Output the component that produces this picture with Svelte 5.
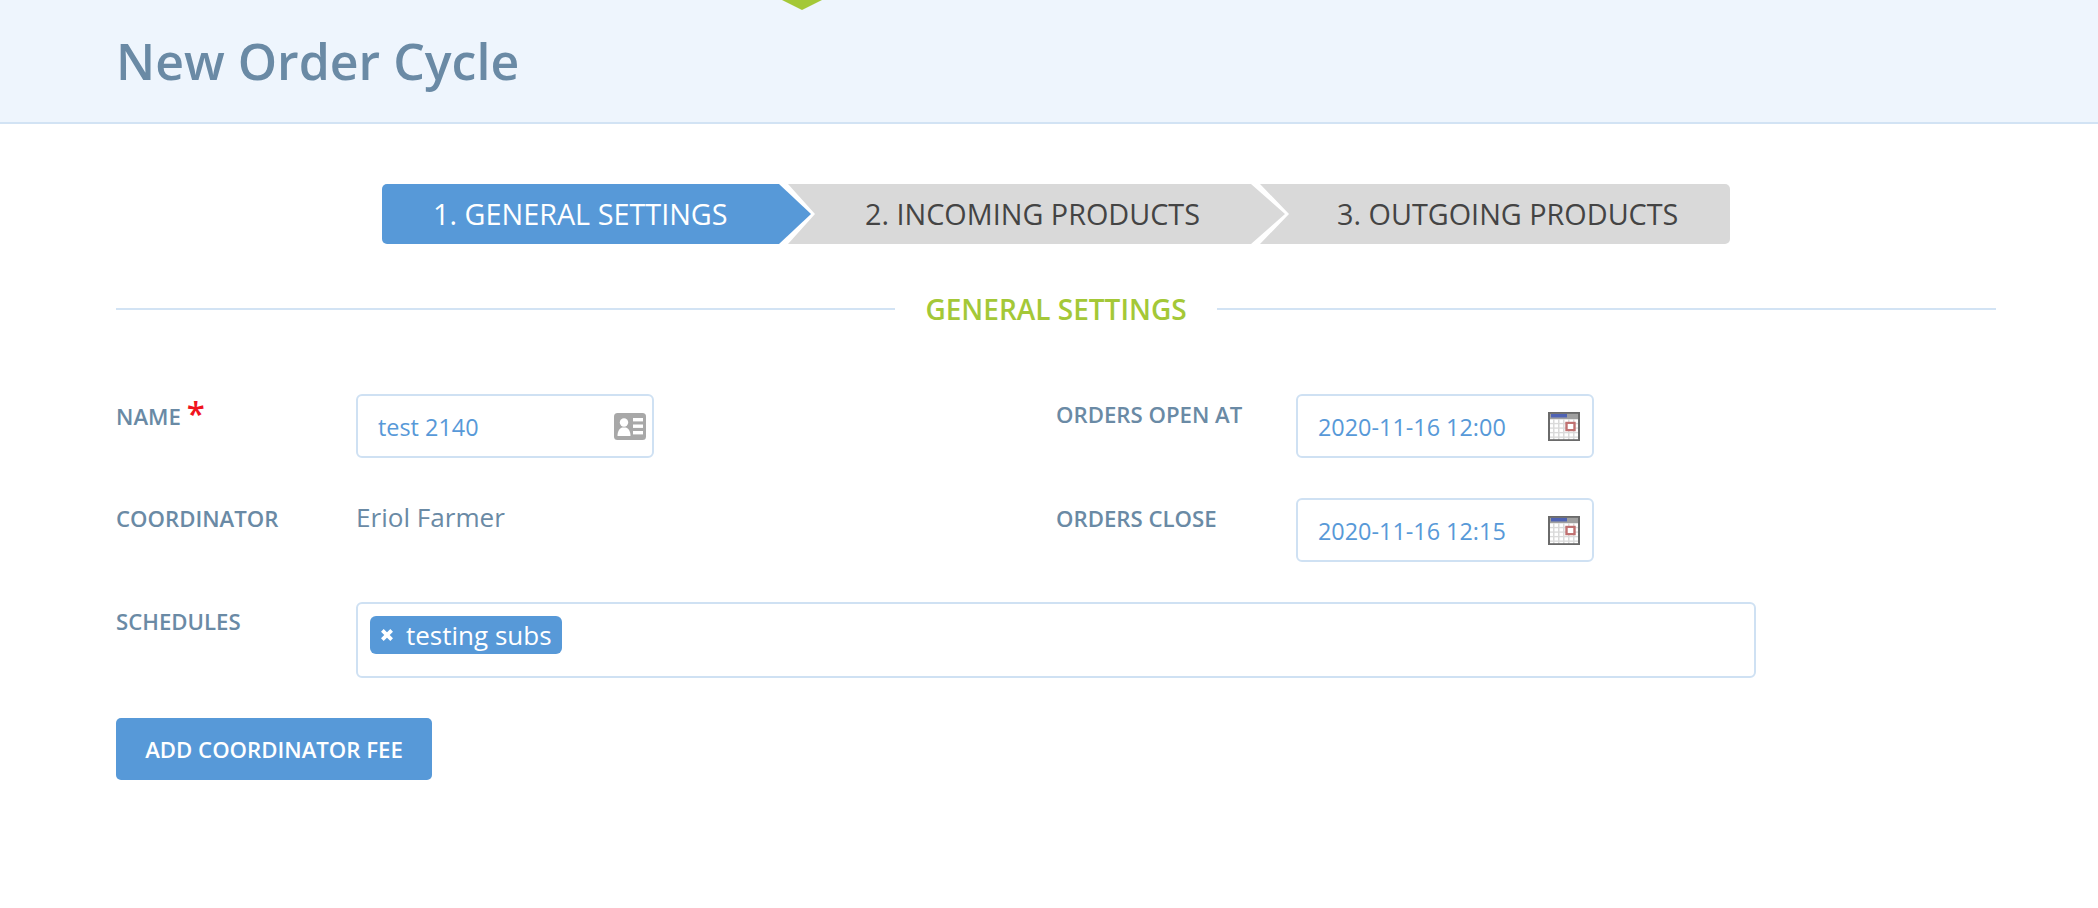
<script>
  const calendarCols = [5, 10, 15, 20, 25];
  const calendarRows = [12, 17, 22, 27];
</script>

{#snippet calendar()}
  <svg class="cal" viewBox="0 0 32 32" preserveAspectRatio="none" aria-hidden="true">
    <rect x="0" y="0" width="32" height="32" fill="#fff" />
    <rect x="0" y="0" width="32" height="8" fill="#a0a0a0" />
    <rect x="3" y="2" width="16" height="4" fill="#4f63b4" />
    {#each calendarCols as x}<rect {x} y="8" width="1.5" height="24" fill="#dadada" />{/each}
    {#each calendarRows as y}<rect x="0" {y} width="32" height="1.5" fill="#dadada" />{/each}
    <rect x="18.5" y="12" width="8" height="8" fill="#fff" stroke="#c07070" stroke-width="2.4" />
    <rect x="1" y="1" width="30" height="30" fill="none" stroke="#6a6a6a" stroke-width="2" />
  </svg>
{/snippet}

<div class="page">
  <header class="banner">
    <span class="notch"></span>
    <h1>New Order Cycle</h1>
  </header>

  <main class="content">
    <nav class="steps">
      <div class="step first active">1. GENERAL SETTINGS</div>
      <div class="step second">2. INCOMING PRODUCTS</div>
      <div class="step third">3. OUTGOING PRODUCTS</div>
    </nav>

    <div class="divider"><span>GENERAL SETTINGS</span></div>

    <form class="form">
      <div class="row">
        <div class="col">
          <label class="lbl name">NAME <em>*</em></label>
          <div class="field">
            <span class="val">test 2140</span>
            <svg class="card" viewBox="0 0 32 27" aria-hidden="true">
              <rect width="32" height="27" rx="3.5" fill="#a8a8a8" />
              <circle cx="10" cy="9.5" r="4.2" fill="#fff" />
              <path d="M3.5 23c0-5 2-7.5 4.5-8.5h4c2.5 1 4.5 3.5 4.5 8.5z" fill="#fff" />
              <rect x="19" y="5" width="10" height="3.4" fill="#fff" />
              <rect x="19" y="11.5" width="10" height="3.4" fill="#fff" />
              <rect x="19" y="18" width="10" height="3.4" fill="#fff" />
            </svg>
          </div>
        </div>
        <div class="col right">
          <label class="lbl">ORDERS OPEN AT</label>
          <div class="field"><span class="val">2020-11-16 12:00</span>{@render calendar()}</div>
        </div>
      </div>

      <div class="row">
        <div class="col">
          <label class="lbl coord">COORDINATOR</label>
          <span class="plain">Eriol Farmer</span>
        </div>
        <div class="col right">
          <label class="lbl">ORDERS CLOSE</label>
          <div class="field"><span class="val">2020-11-16 12:15</span>{@render calendar()}</div>
        </div>
      </div>

      <div class="row">
        <div class="col wide">
          <label class="lbl sched">SCHEDULES</label>
          <div class="multi">
            <span class="tag">
              <svg class="x" viewBox="0 0 12 12" aria-hidden="true"><path d="M2 2l8 8M10 2l-8 8" stroke="#fff" stroke-width="3.2" /></svg>
              testing subs
            </span>
          </div>
        </div>
      </div>

      <button type="button" class="fee">ADD COORDINATOR FEE</button>
    </form>
  </main>
</div>

<style>
  :global(body) {
    margin: 0;
    background: #fff;
  }
  .page {
    font-family: "Open Sans", sans-serif;
    width: 2098px;
    height: 908px;
    overflow: hidden;
  }
  .banner {
    position: relative;
    height: 122px;
    background: #eef5fd;
    border-bottom: 2px solid #d2e3f4;
    padding-left: 116px;
    box-sizing: content-box;
  }
  .notch {
    position: absolute;
    left: 782px;
    top: 0;
    width: 40px;
    height: 10px;
    background: #a4c837;
    clip-path: polygon(0 0, 100% 0, 50% 100%);
  }
  h1 {
    margin: 0;
    padding-top: 29px;
    font-size: 50px;
    line-height: 64px;
    font-weight: 600;
    color: #6a8aa5;
  }
  .content {
    padding: 60px 102px 0 116px;
  }
  .steps {
    display: flex;
    height: 60px;
    margin-left: 266px;
  }
  .step {
    height: 60px;
    line-height: 60px;
    box-sizing: border-box;
    font-size: 28.8px;
    background: #d9d9d9;
    color: #444;
    white-space: nowrap;
  }
  .step.active {
    background: #5799d8;
    color: #fff;
  }
  .first {
    width: 429px;
    padding-left: 51px;
    border-radius: 5px 0 0 5px;
    clip-path: polygon(0 0, 397px 0, 100% 50%, 397px 100%, 0 100%);
  }
  .second {
    width: 497px;
    margin-left: -23px;
    padding-left: 77px;
    clip-path: polygon(0 0, 463px 0, 100% 50%, 463px 100%, 0 100%, 27px 50%);
  }
  .third {
    width: 470px;
    margin-left: -25px;
    padding-left: 77px;
    border-radius: 0 5px 5px 0;
    clip-path: polygon(0 0, 100% 0, 100% 100%, 0 100%, 29px 50%);
  }
  .divider {
    display: flex;
    align-items: center;
    gap: 30px;
    margin-top: 45px;
    height: 40px;
    font-size: 28px;
    font-weight: 600;
    color: #a4c837;
    white-space: nowrap;
  }
  .divider::before,
  .divider::after {
    content: "";
    flex: 1;
    height: 2px;
    background: #d2e3f4;
  }
  .form {
    padding-top: 65px;
  }
  .row {
    display: flex;
    height: 64px;
    margin-bottom: 40px;
  }
  .row:nth-child(3) {
    height: 76px;
    margin-bottom: 40px;
  }
  .col {
    display: flex;
    width: 940px;
  }
  .col.right {
    width: auto;
  }
  .col.wide {
    width: 100%;
  }
  .lbl {
    width: 240px;
    padding-top: 5px;
    font-size: 22.2px;
    line-height: 32px;
    font-weight: 600;
    color: #6a8aa5;
    white-space: nowrap;
  }
  .lbl.name {
    padding-top: 7px;
  }
  .lbl.sched {
    padding-top: 4px;
  }
  .lbl em {
    font-style: normal;
    color: #f0141e;
    font-size: 33px;
    line-height: 20px;
    font-weight: 600;
    vertical-align: -1px;
  }
  .lbl.coord {
    padding-top: 5px;
  }
  .field {
    display: flex;
    align-items: center;
    justify-content: space-between;
    width: 298px;
    height: 64px;
    box-sizing: border-box;
    border: 2px solid #cfe1f3;
    border-radius: 6px;
    padding: 0 6px 0 20px;
    background: #fff;
  }
  .val {
    font-size: 23.4px;
    color: #5799d8;
    white-space: nowrap;
    position: relative;
    top: 1px;
  }
  .card {
    width: 32px;
    height: 27px;
    flex: none;
  }
  .cal {
    width: 32px;
    height: 29px;
    flex: none;
    margin-right: 6px;
  }
  .plain {
    font-size: 26.1px;
    line-height: 36px;
    padding-top: 1px;
    color: #6a8aa5;
  }
  .multi {
    width: 1400px;
    height: 76px;
    box-sizing: border-box;
    border: 2px solid #cfe1f3;
    border-radius: 6px;
    padding: 12px;
  }
  .tag {
    display: inline-flex;
    align-items: center;
    gap: 12px;
    height: 38px;
    padding: 0 10px 0 10px;
    background: #5799d8;
    border-radius: 6px;
    color: #fff;
    font-size: 26px;
  }
  .x {
    width: 14px;
    height: 14px;
  }
  .fee {
    display: block;
    width: 316px;
    height: 62px;
    padding: 0;
    border: 0;
    border-radius: 5px;
    background: #5799d8;
    color: #fff;
    font-family: inherit;
    font-size: 22.2px;
    font-weight: 600;
  }
</style>
